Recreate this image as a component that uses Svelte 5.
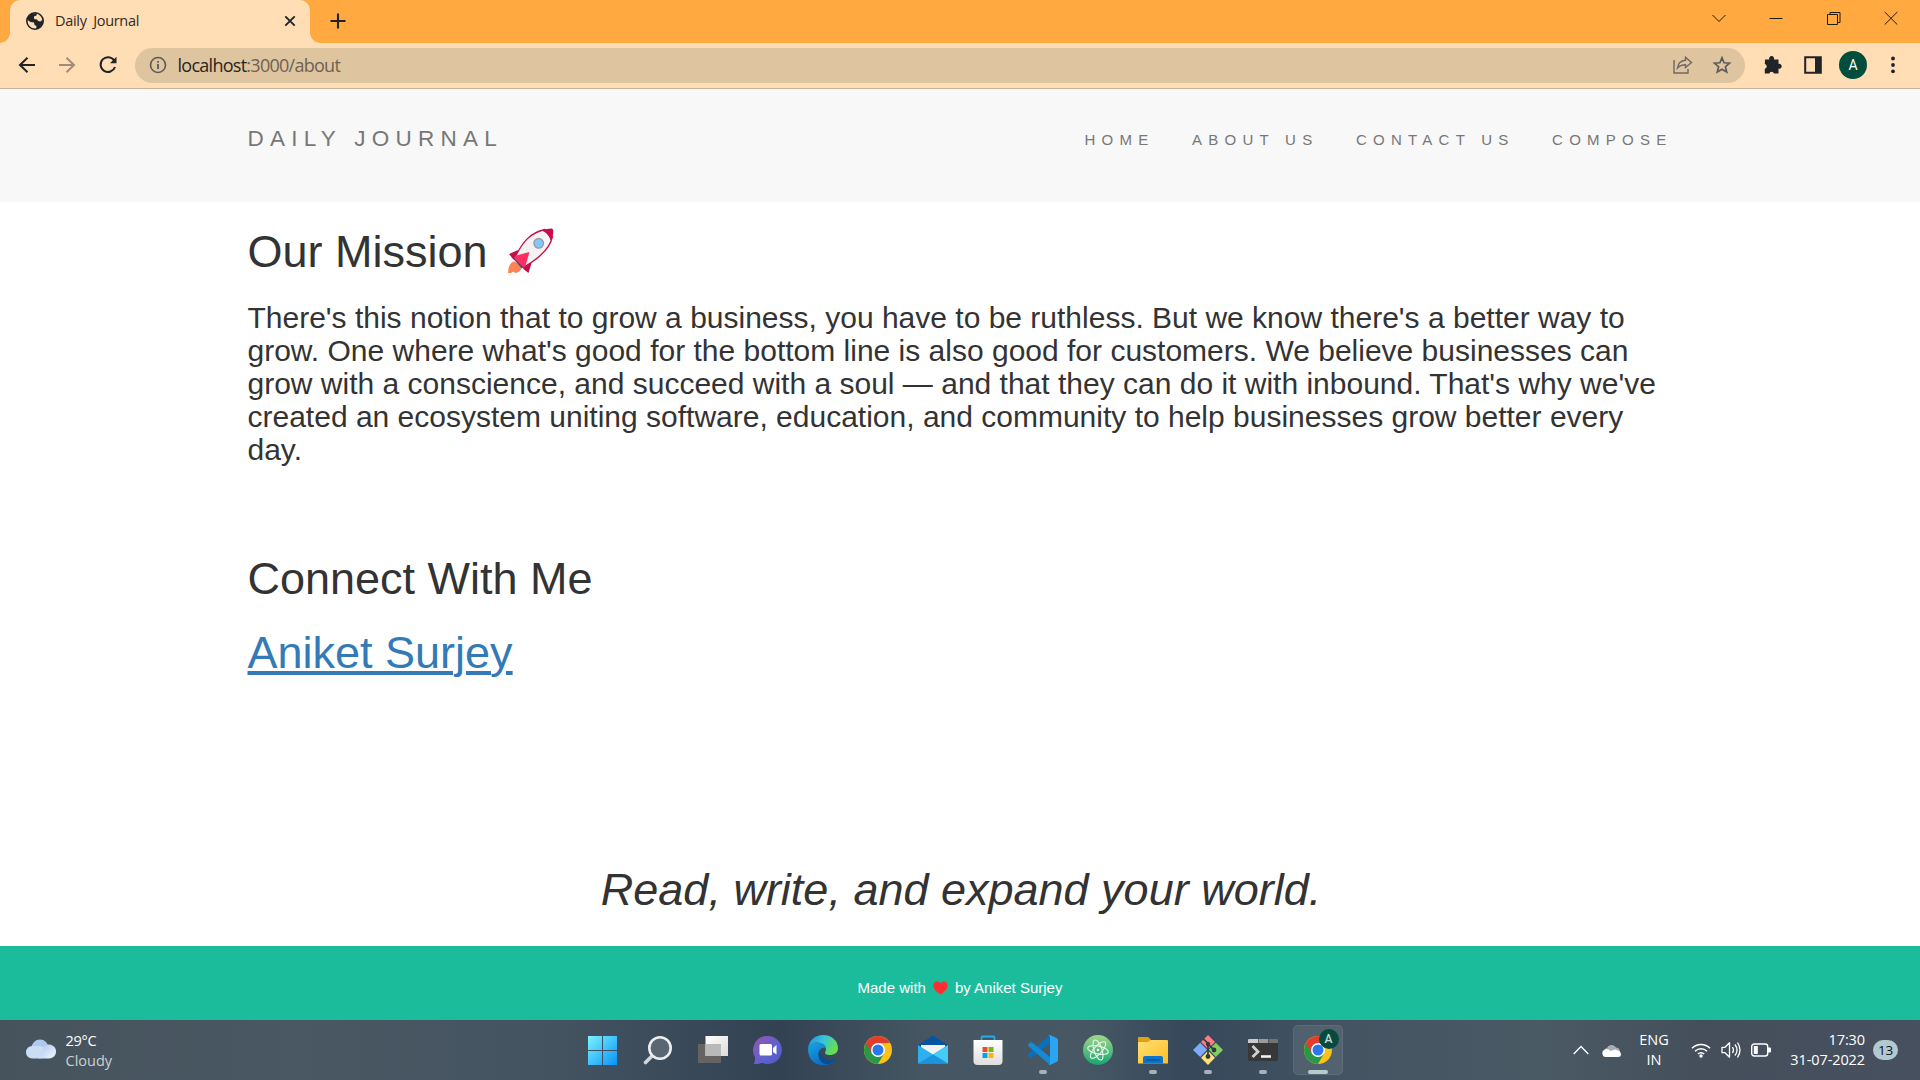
<script>
  const links = ['HOME', 'ABOUT US', 'CONTACT US', 'COMPOSE'];
  const apps = [
    { id: 'start' }, { id: 'search' }, { id: 'tasks' }, { id: 'chat' }, { id: 'edge' },
    { id: 'chrome' }, { id: 'mail' }, { id: 'store' }, { id: 'code', open: true },
    { id: 'atom' }, { id: 'files', open: true }, { id: 'git', open: true },
    { id: 'terminal', open: true }, { id: 'chrome', open: true, active: true }
  ];
</script>

{#snippet chromeLogo()}
  <circle cx="15" cy="15" r="14" fill="#fbc116" />
  <path d="M15 15 2.9 8A14 14 0 0 0 15 29l6-10.500Z" fill="#279847" />
  <path d="M15 15 8.900 18.500 2.900 8A14 14 0 0 1 27.100 8H15Z" fill="#e33b2e" />
  <circle cx="15" cy="15" r="7" fill="#fff" />
  <circle cx="15" cy="15" r="5.500" fill="#2a78ea" />
{/snippet}

{#snippet appIcon(id)}
  <svg class="app-icon" viewBox="0 0 30 30">
    {#if id === 'start'}
      <defs><linearGradient id="win" x1="0" y1="0" x2="1" y2="1"><stop stop-color="#7cf3ff" /><stop offset="1" stop-color="#0793f8" /></linearGradient></defs>
      <path d="M0 1h14v14H0zM15 1h14v14H15zM0 16h14v14H0zM15 16h14v14H15z" fill="url(#win)" />
    {:else if id === 'search'}
      <path d="m9.500 20.500-7 7" stroke="#d3d7da" stroke-width="3.600" stroke-linecap="round" />
      <circle cx="17" cy="13" r="10.700" fill="#5a6773" stroke="#eceef0" stroke-width="2.600" />
    {:else if id === 'tasks'}
      <defs><linearGradient id="tw" x1="0" y1="0" x2="1" y2="1"><stop stop-color="#fff" /><stop offset="1" stop-color="#dcdcdc" /></linearGradient></defs>
      <path d="M0 9h23v19H0z" fill="#656463" /><path d="M7.500 1H30v20H7.500z" fill="url(#tw)" /><path d="M7.500 9H23v12H7.500z" fill="#b9b9b9" />
    {:else if id === 'chat'}
      <defs><linearGradient id="ch" x1="0" y1="0" x2="1" y2="1"><stop stop-color="#9656ae" /><stop offset=".6" stop-color="#5d62cf" /><stop offset="1" stop-color="#5157bd" /></linearGradient></defs>
      <path d="M15 1a14 14 0 1 1-6 26.700C6 29 3 29 .8 29c1-2 1.200-4 1.200-7A14 14 0 0 1 15 1Z" fill="url(#ch)" />
      <rect x="6.500" y="9" width="12.500" height="11.500" rx="1.500" fill="#fff" /><path d="m20 13 3.500-3v9.500L20 17Z" fill="#fff" />
    {:else if id === 'edge'}
      <defs>
        <linearGradient id="e1" x1="0" y1="0" x2="1" y2=".4"><stop stop-color="#168cd8" /><stop offset=".5" stop-color="#35c2df" /><stop offset="1" stop-color="#65df50" /></linearGradient>
        <linearGradient id="e2" x1="0" y1="0" x2=".7" y2="1"><stop stop-color="#1aa4e3" /><stop offset="1" stop-color="#0b65bd" /></linearGradient>
      </defs>
      <path d="M0 14C1 5 7 0 15 0c9 0 15 6 15 13 0 5-4 7-8 7-4 0-6-1.500-4.500-3.500C20 11 14 7.500 9 7.500 5 7.500 2 10 0 14Z" fill="url(#e1)" />
      <path d="M0 14C2 9 5 7.500 9 7.500c5 0 9 2 9 6-5-3-9 4-6 9 3 6 10 6 15 3-3 4-8 5-12 4.500C6 30 0 24 0 14Z" fill="url(#e2)" />
      <path d="M11.500 15c-3 5 0 15 9 14.200 3-1 5-2 7-5.200-7 3-15 0-16-9Z" fill="#0b4c92" />
    {:else if id === 'chrome'}
      {@render chromeLogo()}
    {:else if id === 'mail'}
      <path d="M0 10 15 .5 30 10v2H0Z" fill="#0754a0" /><path d="M3 10h24v10H3Z" fill="#f2f2f2" />
      <path d="M0 10v18.500h30V10L15 19.500Z" fill="#2cb1ee" /><path d="m15 19.500 15 9V10Z" fill="#45ccf4" /><path d="m0 28.500 15-9 15 9Z" fill="#1b93df" />
    {:else if id === 'store'}
      <defs><linearGradient id="st" x1="0" y1="0" x2="0" y2="1"><stop stop-color="#fff" /><stop offset="1" stop-color="#dedede" /></linearGradient></defs>
      <path d="M8.500 7V2.500q0-1 1-1h11q1 0 1 1V7" fill="none" stroke="#29a9e5" stroke-width="1.800" />
      <path d="M.5 5h29v21q0 4-4 4h-21q-4 0-4-4Z" fill="url(#st)" />
      <path d="M9.500 12h5v5h-5z" fill="#ef4f27" /><path d="M15.500 12h5v5h-5z" fill="#7db904" /><path d="M9.500 18h5v5h-5z" fill="#05a3ec" /><path d="M15.500 18h5v5h-5z" fill="#fbb407" />
    {:else if id === 'code'}
      <path d="M22 0v8L4 22.500q-1.200.8-2.500-.5L.5 20.700q-.8-1.200.3-2.200Z" fill="#0870bd" />
      <path d="M22 30v-8L4 7.500Q2.800 6.700 1.500 8L.5 9.300q-.8 1.200.3 2.200Z" fill="#148bd5" />
      <path d="m22 0 7 3.200q1 .5 1 1.800v20q0 1.300-1 1.800L22 30q-1 0-1.500-1 1.500.5 1.500-1V2q0-1.500-1.500-1 .5-1 1.500-1Z" fill="#2aa5f2" />
    {:else if id === 'atom'}
      <defs><linearGradient id="at" x1="0" y1="0" x2="0" y2="1"><stop stop-color="#a2d589" /><stop offset="1" stop-color="#17a673" /></linearGradient></defs>
      <circle cx="15" cy="15" r="15" fill="url(#at)" />
      <g fill="none" stroke="#e7f7e8" stroke-width="1.100"><ellipse cx="15" cy="15" rx="10.500" ry="4" transform="rotate(12 15 15)" /><ellipse cx="15" cy="15" rx="10.500" ry="4" transform="rotate(72 15 15)" /><ellipse cx="15" cy="15" rx="10.500" ry="4" transform="rotate(132 15 15)" /></g>
      <circle cx="15" cy="15" r="1.300" fill="#fff" />
    {:else if id === 'files'}
      <defs><linearGradient id="fi" x1="0" y1="0" x2="1" y2="1"><stop stop-color="#ffdf75" /><stop offset="1" stop-color="#fdbe24" /></linearGradient></defs>
      <path d="M0 3q0-1 1-1h8.500q1 0 1.500.8L13 5v5H0Z" fill="#e0a00f" /><path d="M0 7h9.500L13 5h16q1 0 1 1v22.500H0Z" fill="url(#fi)" />
      <path d="M5 28.500V23q0-2 2-2h16q2 0 2 2v5.500Z" fill="#0d73cb" /><path d="M8.500 25h13" stroke="#074d91" stroke-width="1.200" />
    {:else if id === 'git'}
      <path d="m15 0 7 7-7 7-7-7Z" fill="#ff7b80" /><path d="m7.200 7.700 7 7-7 7.300-7.200-7Z" fill="#7fa9fb" /><path d="m22.800 7.700 7.200 7.200-7.200 7.100-7-7.200Z" fill="#84cd5f" /><path d="m15 15.800 7 7-7 7.200-7-7.200Z" fill="#ffe175" />
      <path d="m10.500 4 4.500 4.500v14M15 9l6 6" stroke="#303a42" stroke-width="1.700" fill="none" /><circle cx="15" cy="9" r="2.200" fill="#303a42" /><circle cx="15" cy="21.500" r="2.400" fill="#303a42" /><circle cx="21" cy="15" r="2.400" fill="#303a42" />
    {:else if id === 'terminal'}
      <path d="M0 5q0-1 1-1h28q1 0 1 1v20q0 1-1 1H1q-1 0-1-1Z" fill="#383838" /><path d="M0 8V5q0-1 1-1h9v4Z" fill="#c9cbcc" /><path d="M10.500 4H20v4h-9.500Z" fill="#999b9c" /><path d="M20.500 4H29q1 0 1 1v3h-9.500Z" fill="#717374" />
      <path d="m4.500 11 5.500 5.700L4.500 22" stroke="#d0d0d0" stroke-width="2.800" fill="none" /><path d="M13 21.500h10" stroke="#f2f2f2" stroke-width="2.600" />
    {/if}
  </svg>
{/snippet}

<div class="screen">
  <header class="tabs">
    <div class="tab">
      <svg class="globe" viewBox="0 0 18 18"><circle cx="9" cy="9" r="8.200" fill="#ffddb5" stroke="#202428" stroke-width="1.600" /><path d="M1.500 6 5 1.800 11 1l-.5 2.500L8 4.500v2l3 .5 1 2 2.500.5 2-2L17 11l-3 4.500-4 1.500.5-3-2-1-.5-2.500-3.500-.5L1.500 8Z" fill="#202428" /><path d="M8.500 4.800 11 4l2 1.500-1 2-3.500-.2ZM2 10l3 1.500 1.500 2.500-.5 2Z" fill="#ffddb5" /></svg>
      <span class="tab-title">Daily Journal</span>
      <svg class="close" viewBox="0 0 12 12"><path d="m1.300 1.300 9.400 9.400m0-9.400-9.400 9.400" stroke="#202428" stroke-width="1.900" /></svg>
    </div>
    <svg class="plus" viewBox="0 0 16 16"><path d="M8 .5v15M.5 8h15" stroke="#202428" stroke-width="2.100" /></svg>
    <div class="window-controls">
      <svg viewBox="0 0 14 14"><path d="m.5 4 6.500 6.500L13.500 4" /></svg>
      <svg viewBox="0 0 14 14"><path d="M.5 7.500h13" /></svg>
      <svg viewBox="0 0 14 14"><path d="M1.500 3.500h9v10h-10v-10ZM3 3V1.500h10v10h-2" /></svg>
      <svg viewBox="0 0 14 14"><path d="m.7 1 12.600 12.600M13.300 1 .7 13.600" /></svg>
    </div>
  </header>

  <div class="toolbar">
    <svg class="nav-icon" viewBox="0 0 18 18"><path d="M17 9H2m7.500-7.300L2 9l7.500 7.300" /></svg>
    <svg class="nav-icon muted" viewBox="0 0 18 18"><path d="M1 9h15M8.500 1.700 16 9l-7.500 7.300" /></svg>
    <svg class="nav-icon reload" viewBox="0 0 18 18"><path d="M15.200 4.500A7.400 7.400 0 1 0 16 11" /><path d="M17.500.8v6.500H11Z" fill="#202428" stroke="none" /></svg>
    <div class="address">
      <svg class="info" viewBox="0 0 18 18"><circle cx="9" cy="9" r="7.500" fill="none" stroke="#5b5b5a" stroke-width="1.600" /><path d="M9 8v5M9 5v1.800" stroke="#5b5b5a" stroke-width="1.800" /></svg>
      <span class="url">localhost<i>:3000/about</i></span>
      <svg class="share" viewBox="0 0 20 18"><path d="M2 5H1v12h14v-4" /><path d="M12.500 1.200 18.500 6.500l-6 5V8.700c-3.500 0-6 .8-8 3.300.5-4.500 3.500-7.300 8-7.700Z" /></svg>
      <svg class="star" viewBox="0 0 18 18"><path d="m9 1.800 2.100 5 5.400.4-4.100 3.500 1.300 5.300L9 13.200 4.300 16l1.300-5.300L1.500 7.200l5.400-.4Z" /></svg>
    </div>
    <svg class="puzzle" viewBox="0 0 18 18"><path d="M1 3.500h4.300a2.500 2.500 0 1 1 4.600 0h4.600v4.300a2.500 2.500 0 1 1 0 4.800v5H10a2.400 2.400 0 0 0-4.700 0H.800v-4.800a2.400 2.400 0 0 0 0-4.700Z" fill="#202428" /></svg>
    <svg class="panel" viewBox="0 0 18 18"><path d="M1.200 1.200h15.600v15.600H1.200z" fill="none" stroke="#202428" stroke-width="2" /><path d="M11 1h6v16h-6z" fill="#202428" /></svg>
    <span class="avatar">A</span>
    <svg class="more" viewBox="0 0 4 18"><circle cx="2" cy="2.500" r="1.900" /><circle cx="2" cy="9" r="1.900" /><circle cx="2" cy="15.300" r="1.900" /></svg>
  </div>

  <nav class="navbar">
    <div class="container nav-row">
      <a class="brand" href="#home">DAILY JOURNAL</a>
      <div class="links">{#each links as link}<a href="#page">{link}</a>{/each}</div>
    </div>
  </nav>

  <main class="container">
    <h1 class="mission">Our Mission
      <svg class="rocket" viewBox="0 0 44 44">
        <path d="M10 21 1 25l4 5 9 1ZM23 34l-3 9.500-5-4-1-8Z" fill="#ca0b4a" />
        <path d="M6 32q-6 2-6 11.500h3l2-1.500 2 1.500q5 0 7-6Z" fill="#ff8354" />
        <path d="M36 1C22 4 14 13 6.500 29l8.500 9C31 29 41 20 43.500 8Z" fill="#f3f3f3" stroke="#ca0b4a" stroke-width="1.300" />
        <path d="M33 2q5-2 9.500-2Q45 0 44 6q-.5 3-2.500 5.500Q40 5 33 2Z" fill="#ca0b4a" />
        <path d="m5.500 30 2-2.500 8.500 9-2.500 2.500Z" fill="#5e416c" />
        <path d="M21 23 8 26.500Q5.500 27.500 7 30l7.500 7.500Q16 38.500 17 37Z" fill="#ff2e62" />
        <circle cx="30" cy="14.500" r="4.700" fill="#82c8fb" stroke="#9b9b9b" stroke-width="1.300" />
      </svg>
    </h1>
    <h3>There's this notion that to grow a business, you have to be ruthless. But we know there's a better way to grow. One where what's good for the bottom line is also good for customers. We believe businesses can grow with a conscience, and succeed with a soul — and that they can do it with inbound. That's why we've created an ecosystem uniting software, education, and community to help businesses grow better every day.</h3>
    <h1 class="connect">Connect With Me</h1>
    <h1 class="person"><a class="profile" href="#profile">Aniket Surjey</a></h1>
    <h1 class="motto"><em>Read, write, and expand your world.</em></h1>
  </main>

  <footer class="footer">
    <span>Made with</span>
    <svg viewBox="0 0 15 14"><path d="M7.500 13.500C4 11 .3 8 .3 4.500.3.500 5-1 7.500 2.300 10-1 14.700.5 14.700 4.500c0 3.500-3.700 6.500-7.200 9Z" fill="#fb2f31" /></svg>
    <span>by Aniket Surjey</span>
  </footer>

  <div class="taskbar">
    <div class="weather">
      <svg viewBox="0 0 30 20"><defs><linearGradient id="cl" x1="0" y1="0" x2="1" y2="1"><stop stop-color="#a9c7ef" /><stop offset="1" stop-color="#f3f6fb" /></linearGradient></defs><circle cx="14" cy="9" r="8.500" fill="#b0c8ef" /><rect y="7" width="20" height="12.500" rx="6.200" fill="#cbdcf5" /><path d="M13 19.500h10.500A7 7 0 1 0 17 9Z" fill="url(#cl)" /></svg>
      <div><div>29°C</div><div class="dim">Cloudy</div></div>
    </div>
    <div class="apps">
      {#each apps as app}
        <div class="app" class:active={app.active}>
          {@render appIcon(app.id)}
          {#if app.active}<span class="profile-badge">A</span>{/if}
          {#if app.open}<span class="running"></span>{/if}
        </div>
      {/each}
    </div>
    <div class="tray">
      <svg class="chevron" viewBox="0 0 16 10"><path d="m.7 9 7.300-7.500L15.300 9" fill="none" stroke="#fff" stroke-width="1.300" /></svg>
      <svg class="cloud" viewBox="0 0 20 13"><path d="M3 8a4 4 0 0 1 3-4 5 5 0 0 1 9-.5A4.500 4.500 0 0 1 19 8Z" fill="#a8adb2" /><path d="M4 13a4 4 0 0 1-.3-7.500Q7 4 9.500 7L14 5.500q6 1 6 5 0 2.500-3 2.500Z" fill="#fff" /></svg>
      <div class="lang"><div>ENG</div><div>IN</div></div>
      <svg class="wifi" viewBox="0 0 20 16"><path d="M1 6.200a12.700 12.700 0 0 1 18 0M4 9.200a8.500 8.500 0 0 1 12 0M6.800 12a4.500 4.500 0 0 1 6.400 0" fill="none" stroke="#fff" stroke-width="1.500" /><circle cx="10" cy="14" r="1.700" fill="#fff" /></svg>
      <svg class="volume" viewBox="0 0 20 18"><path d="M1 6.300h3l4.500-4.500v14.400L4 11.700H1ZM11.500 6q2 3 0 6M14 3.500q4 5.500 0 11M16.500 1.500q5 7.500 0 15" fill="none" stroke="#fff" stroke-width="1.300" stroke-linejoin="round" /></svg>
      <svg class="battery" viewBox="0 0 20 14"><rect x=".7" y="1" width="16" height="12" rx="2.500" fill="none" stroke="#fff" stroke-width="1.400" /><path d="M2.800 3h4v8h-4zM17 4.500h2q1 0 1 1v3q0 1-1 1h-2z" fill="#fff" /></svg>
      <div class="clock"><div>17:30</div><div>31-07-2022</div></div>
      <span class="count">13</span>
    </div>
  </div>
</div>

<style>
  :global(body) { margin: 0; overflow: hidden; }
  * { box-sizing: border-box; }
  svg { display: block; flex: none; overflow: visible; }
  a { color: inherit; text-decoration: none; }
  .screen { width: 1920px; height: 1080px; display: flex; flex-direction: column; background: #fff; font-family: "Liberation Sans", Arial, sans-serif; color: #333; }
  .tabs { height: 43px; flex: none; display: flex; background: #ffa940; padding-left: 10px; }
  .tab { position: relative; width: 300px; height: 43px; padding: 0 14px 1px 16px; display: flex; align-items: center; background: #ffddb5; border-radius: 10px 10px 0 0; color: #302a24; }
  .tab::before, .tab::after { content: ""; position: absolute; bottom: 0; width: 10px; height: 10px; }
  .tab::before { left: -10px; background: radial-gradient(circle at 0 0, transparent 9.500px, #ffddb5 10px); }
  .tab::after { right: -10px; background: radial-gradient(circle at 100% 0, transparent 9.500px, #ffddb5 10px); }
  .globe { width: 18px; height: 18px; }
  .tab-title { margin-left: 11px; flex: 1; font: 14.500px/20px "Open Sans", sans-serif; letter-spacing: -.3px; word-spacing: 3px; white-space: nowrap; }
  .close { width: 12px; height: 12px; }
  .plus { width: 16px; height: 16px; margin: 13px 0 0 19.500px; }
  .window-controls { margin-left: auto; display: flex; gap: 43.300px; padding: 11px 22px 0 0; }
  .window-controls svg { width: 14px; height: 14px; fill: none; stroke: #201a10; stroke-width: 1; }
  .toolbar { height: 46px; flex: none; display: flex; align-items: center; background: #ffddb5; border-bottom: 1px solid #c9b096; padding: 0 27px 1px 18px; }
  .nav-icon { width: 18px; height: 18px; margin-right: 22px; fill: none; stroke: #202428; stroke-width: 2; }
  .muted { stroke: #a08c77; }
  .reload { margin-left: 1px; margin-right: 21px; }
  .address { height: 35px; width: 1610px; margin-left: -3px; border-radius: 18px; background: #dfc4a0; display: flex; align-items: center; padding: 0 14px 0 14px; }
  .info { width: 18px; height: 18px; }
  .url { margin-left: 10.500px; flex: 1; font: 18px/24px "Open Sans", sans-serif; letter-spacing: -.73px; color: #29251f; }
  .url i { font-style: normal; color: #6d6253; }
  .share { width: 20px; height: 18px; fill: none; stroke: #6c6964; stroke-width: 1.400; }
  .star { width: 18px; height: 18px; margin-left: 20px; fill: none; stroke: #5c5b5c; stroke-width: 1.700; }
  .puzzle { width: 18px; height: 18px; margin-left: 19px; }
  .panel { width: 18px; height: 18px; margin-left: 22px; }
  .avatar { width: 28px; height: 28px; flex: none; margin-left: 17px; border-radius: 50%; background: #014d3e; color: #fff; text-align: center; font: 14px/28px Roboto, sans-serif; }
  .more { width: 4px; height: 18px; margin-left: auto; margin-right: -1.500px; fill: #202428; }
  .container { width: 1462.500px; margin: 0 auto; padding: 0 18.750px; }
  .navbar { height: 113px; flex: none; background: #f8f8f8; color: #777; }
  .nav-row { display: flex; justify-content: space-between; padding-right: 0; }
  .brand { font-size: 22.500px; line-height: 25px; letter-spacing: 6.250px; padding-top: 36.500px; }
  .links { display: flex; padding-top: 37.500px; }
  .links a { padding: 0 18.750px; font-size: 15px; line-height: 25px; letter-spacing: 6.250px; white-space: nowrap; }
  main { flex: 1; min-height: 0; display: flow-root; }
  h1, h3 { font-weight: 400; line-height: 1.1; margin: 25px 0 12.500px; }
  h1 { font-size: 45px; }
  .mission { height: 49.500px; }
  h3 { font-size: 30px; margin-top: 24px; }
  .rocket { display: inline-block; width: 45px; height: 45px; margin: -6px 0 -6px 8px; vertical-align: -6px; transform: translateY(-5.500px); }
  .connect { margin-top: 88.500px; }
  .person { margin-top: 24px; }
  .profile { color: #337ab7; text-decoration: underline; text-decoration-thickness: 4px; text-underline-offset: 3px; }
  .motto { text-align: center; margin: 188px 0 0; padding-left: 2px; }
  .footer { height: 74px; flex: none; background: #1abc9c; color: #fff; display: flex; justify-content: center; align-items: center; font-size: 15px; line-height: 20px; padding-top: 9px; }
  .footer svg { width: 15px; height: 14px; margin: 1px 7px 0; }
  .taskbar { height: 60px; flex: none; display: grid; grid-template-columns: 1fr auto 1fr; color: #fff; font: 14.500px/20px "Open Sans", sans-serif; letter-spacing: -.3px; background: linear-gradient(90deg, #46535d 0, #4a5863 300px, #435360 560px, #334253 780px, #465763 930px, #475864 1080px, #35485a 1190px, #435361 1330px, #4a5a65 1540px, #454f5c 1700px, #46505e 1920px); }
  .weather { display: flex; padding: 11px 0 0 26px; gap: 9.500px; }
  .weather svg { width: 30px; height: 20px; margin-top: 8px; }
  .dim { color: #ccd1d4; letter-spacing: 0; }
  .apps { display: flex; gap: 5px; padding-top: 5px; }
  .app { position: relative; width: 50px; height: 50px; padding: 10px; border-radius: 5px; }
  .app-icon { width: 30px; height: 30px; }
  .active { background: #ffffff17; box-shadow: inset 0 0 0 1px #ffffff12; }
  .running { position: absolute; left: 21px; bottom: 1px; width: 8px; height: 4px; border-radius: 2px; background: #abb1b7; }
  .active .running { left: 15px; width: 20px; background: #b4cbd0; }
  .profile-badge { position: absolute; left: 26px; top: 4px; width: 20px; height: 20px; border-radius: 50%; background: #064b3f; color: #c8dcd7; font: 500 12px/20px Roboto, sans-serif; letter-spacing: 0; text-align: center; }
  .tray { display: flex; justify-content: flex-end; align-items: center; padding-right: 22px; }
  .chevron { width: 16px; height: 10px; }
  .cloud { width: 20px; height: 13px; margin-left: 12px; }
  .lang { width: 30px; margin-left: 18px; text-align: center; letter-spacing: 0; }
  .wifi { width: 20px; height: 16px; margin-left: 22px; }
  .volume { width: 20px; height: 18px; margin-left: 10px; }
  .battery { width: 20px; height: 14px; margin-left: 10px; }
  .clock { width: 76px; margin-left: 18px; text-align: right; white-space: nowrap; letter-spacing: -.1px; }
  .count { width: 25px; height: 20px; margin-left: 8px; border-radius: 10px; background: #b3c9d0; color: #111; text-align: center; font-size: 13.500px; line-height: 21px; }
</style>
